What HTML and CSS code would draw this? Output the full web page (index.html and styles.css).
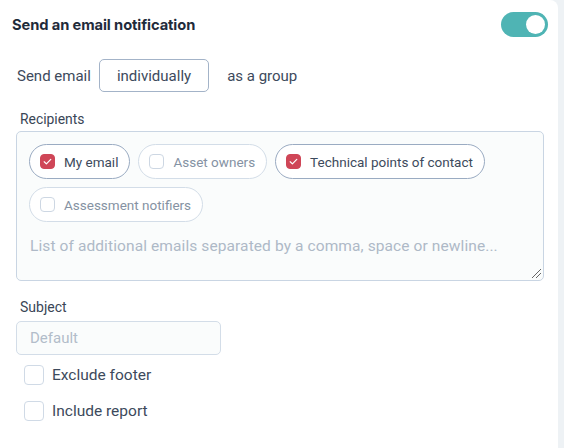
FILE: index.html
```html
<!DOCTYPE html>
<html>
<head>
<meta charset="utf-8">
<link rel="stylesheet" href="styles.css">
</head>
<body>
<div class="page">
  <div class="card">
    <div class="header">
      <h2 class="title">Send an email notification</h2>
      <span class="toggle"><span class="knob"></span></span>
    </div>
    <div class="send-row">
      <span class="send-label">Send email</span>
      <span class="seg seg-active">individually</span>
      <span class="seg">as a group</span>
    </div>
    <div class="field">
      <div class="label">Recipients</div>
      <div class="recipients">
        <div class="chips">
          <span class="chip chip-on"><span class="cb cb-on"><svg viewBox="0 0 16 16" width="15" height="15"><path d="M4.5 8.3l2.3 2.2 4.7-4.8" fill="none" stroke="#fff" stroke-width="1.3" stroke-linecap="round" stroke-linejoin="round"/></svg></span>My email</span>
          <span class="chip"><span class="cb"></span>Asset owners</span>
          <span class="chip chip-on"><span class="cb cb-on"><svg viewBox="0 0 16 16" width="15" height="15"><path d="M4.5 8.3l2.3 2.2 4.7-4.8" fill="none" stroke="#fff" stroke-width="1.3" stroke-linecap="round" stroke-linejoin="round"/></svg></span>Technical points of contact</span>
          <span class="chip"><span class="cb"></span>Assessment notifiers</span>
        </div>
        <textarea class="emails" placeholder="List of additional emails separated by a comma, space or newline..."></textarea>
      </div>
    </div>
    <div class="field subject-field">
      <div class="label">Subject</div>
      <input class="subject" type="text" placeholder="Default">
    </div>
    <label class="check-row"><span class="box"></span>Exclude footer</label>
    <label class="check-row"><span class="box"></span>Include report</label>
  </div>
</div>
</body>
</html>
```

FILE: styles.css
```css
* { box-sizing: border-box; }
html, body { margin: 0; padding: 0; }
body {
  width: 564px;
  height: 448px;
  background: #eef2f5;
  font-family: "Roboto", "Liberation Sans", sans-serif;
  font-size: 15px;
  color: #3d4a5c;
  overflow: hidden;
}
.page { display: flex; }
.card {
  width: 558px;
  height: 448px;
  background: #fff;
  border-radius: 0 8px 0 0;
  padding: 12px 10px 0 12px;
}
.header {
  display: flex;
  justify-content: space-between;
  align-items: center;
  height: 25px;
}
.title {
  margin: 0;
  font-family: "Inter", "Liberation Sans", sans-serif;
  font-weight: 700;
  font-size: 14.7px;
  color: #1f2b3b;
  letter-spacing: -0.1px;
}
.toggle {
  position: relative;
  width: 47px;
  height: 25px;
  border-radius: 13px;
  background: #4fb4b4;
}
.knob {
  position: absolute;
  right: 3px;
  top: 3px;
  width: 19px;
  height: 19px;
  border-radius: 50%;
  background: #fff;
}
.send-row {
  display: flex;
  align-items: center;
  margin-top: 22px;
  padding-left: 5px;
  height: 33px;
}
.send-label { margin-right: 8px; color: #3d4a5c; }
.seg {
  height: 33px;
  display: flex;
  align-items: center;
  padding: 0 17px;
  border: 1px solid transparent;
  border-radius: 5px;
  color: #3d4a5c;
}
.seg-active { border-color: #a3b3c8; }
.field { padding-left: 4px; }
.label {
  margin-top: 18px;
  padding-left: 4px;
  height: 21px;
  font-size: 13.9px;
  color: #3a4656;
  line-height: 18px;
}
.recipients {
  width: 528px;
  height: 150px;
  border: 1px solid #c9d5e3;
  border-radius: 5px;
  background: #fafcfc;
  padding: 12px 12px 0 12px;
  position: relative;
}
.chips {
  display: flex;
  flex-wrap: wrap;
  gap: 8px 8px;
  width: 480px;
}
.chip {
  display: inline-flex;
  align-items: center;
  height: 35px;
  padding: 0 11px 0 10px;
  border: 1px solid #d3dde8;
  border-radius: 18px;
  color: #8592a3;
  font-size: 13.5px;
  background: #fff;
}
.chip-on {
  border-color: #9aabc2;
  color: #3d4a5c;
}
.cb {
  width: 15px;
  height: 15px;
  border: 1px solid #cdd7e3;
  border-radius: 4px;
  margin-right: 9px;
  display: flex;
  align-items: center;
  justify-content: center;
  background: #fff;
}
.cb-on {
  background: #cf4657;
  border-color: #cf4657;
}
.cb svg { display: block; flex: none; }
.emails {
  display: block;
  width: 100%;
  height: 60px;
  margin-top: 9px;
  border: none;
  background: transparent;
  resize: none;
  outline: none;
  padding: 6px 1px;
  font-family: "Roboto", "Liberation Sans", sans-serif;
  font-size: 15.5px;
  letter-spacing: 0.1px;
  color: #3d4a5c;
}
.emails::placeholder { color: #aeb9c7; }
.recipients::after {
  content: "";
  position: absolute;
  right: 2px;
  bottom: 2px;
  width: 9px;
  height: 9px;
  background: linear-gradient(135deg, transparent 45%, #666 45%, #666 52%, transparent 52%, transparent 70%, #666 70%, #666 77%, transparent 77%);
}
.subject-field .label { margin-top: 17px; height: 23px; font-size: 14px; }
.subject {
  display: block;
  width: 205px;
  height: 34px;
  border: 1px solid #d3dde8;
  border-radius: 5px;
  background: #fafcfc;
  padding: 0 13px;
  font-family: "Roboto", "Liberation Sans", sans-serif;
  font-size: 15px;
  outline: none;
}
.subject::placeholder { color: #b2bdca; }
.check-row {
  display: flex;
  align-items: center;
  height: 20px;
  margin-top: 10px;
  padding-left: 12px;
  color: #3d4a5c;
  font-size: 15.5px;
}
.check-row + .check-row { margin-top: 16px; }
.box {
  width: 20px;
  height: 20px;
  border: 1px solid #d0dae6;
  border-radius: 4px;
  margin-right: 8px;
  background: #fff;
}
```
